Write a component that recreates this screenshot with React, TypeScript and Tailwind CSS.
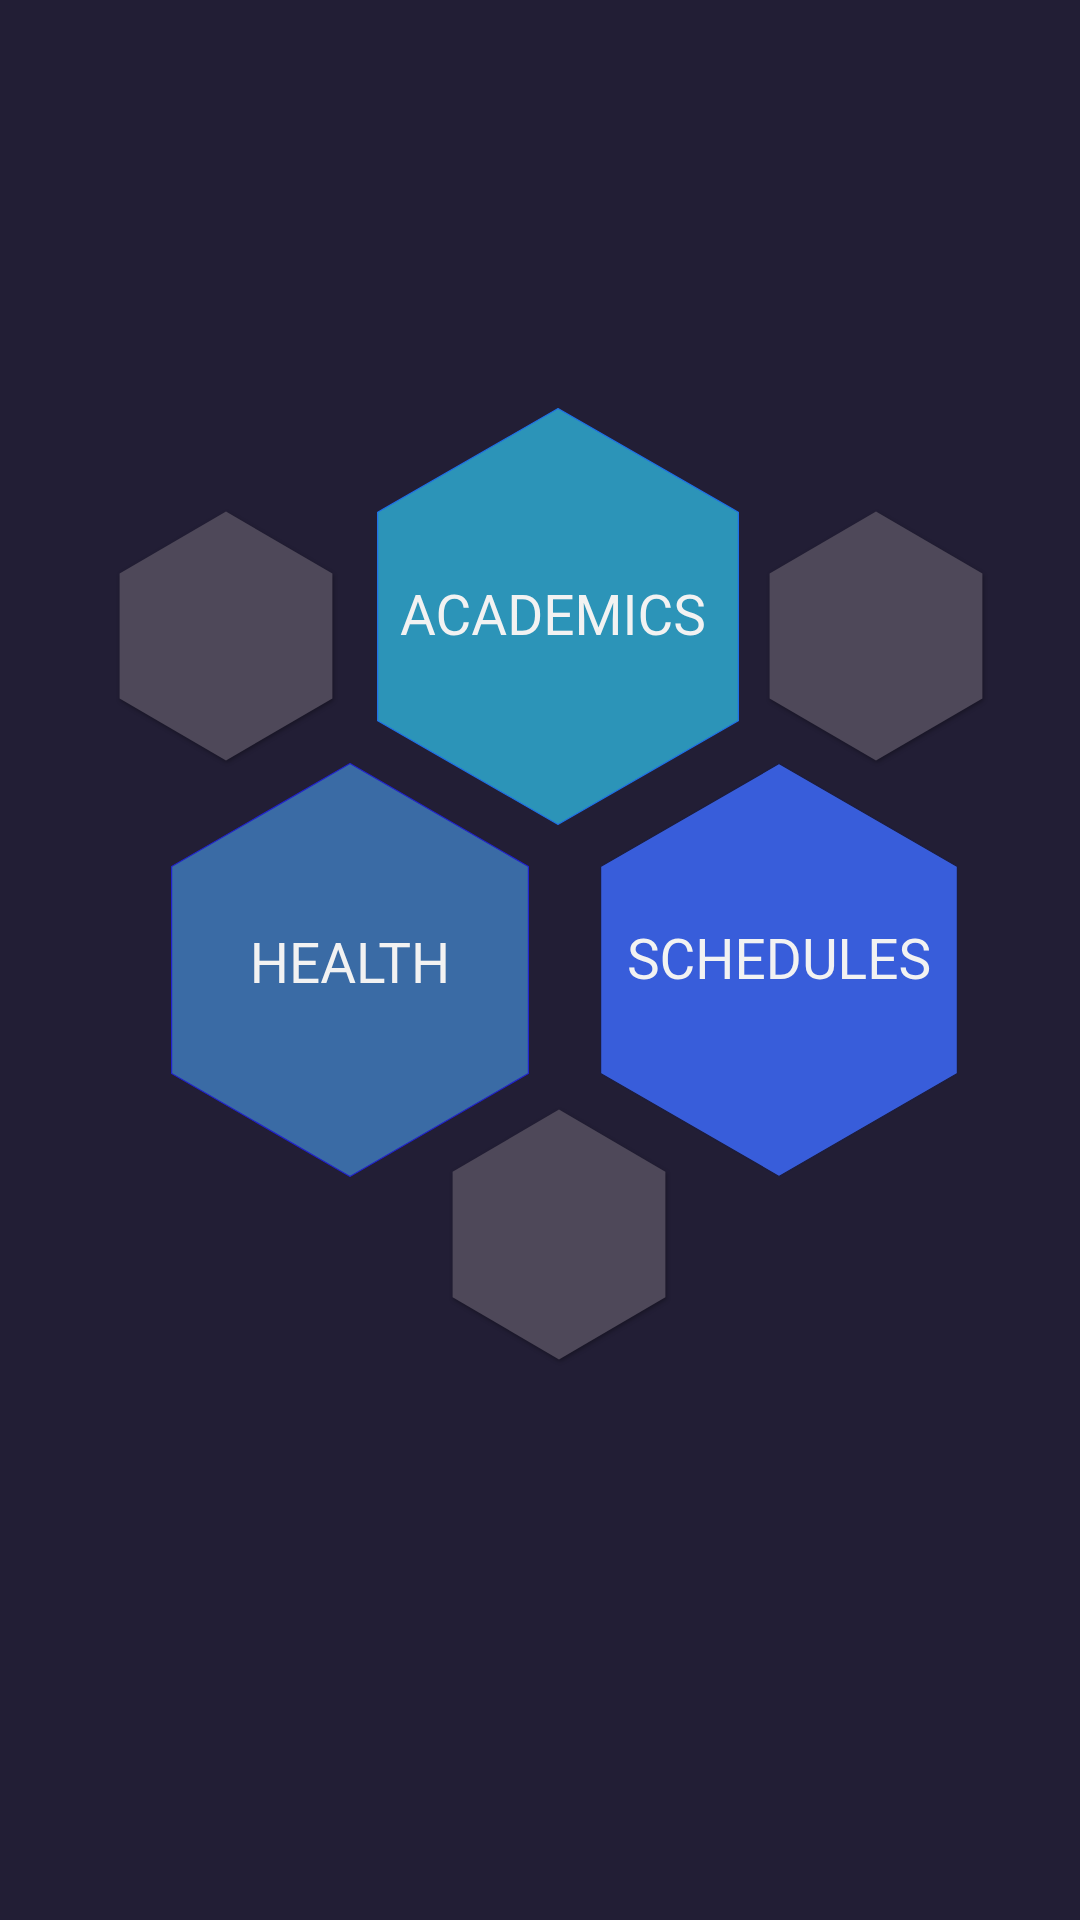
import React from "react";

type HexProps = {
  left: number;
  top: number;
  w: number;
  h: number;
  fill: string;
  stroke?: string;
  label?: string;
  textShift?: number;
  textShiftX?: number;
  shadow?: boolean;
};

function Hex({ left, top, w, h, fill, stroke, label, textShift = 0, textShiftX = 0, shadow }: HexProps) {
  const i = 0.6;
  const pts = [
    [w / 2, i],
    [w - i, h / 4],
    [w - i, (3 * h) / 4],
    [w / 2, h - i],
    [i, (3 * h) / 4],
    [i, h / 4],
  ]
    .map((p) => p.join(","))
    .join(" ");
  return (
    <div
      className="absolute"
      style={{ left, top, width: w, height: h }}
    >
      <svg
        width={w}
        height={h}
        viewBox={`0 0 ${w} ${h}`}
        className={shadow ? "absolute inset-0 drop-shadow-[1px_2px_2px_rgba(0,0,0,0.3)]" : "absolute inset-0"}
      >
        <polygon points={pts} fill={fill} stroke={stroke ?? "none"} strokeWidth={stroke ? 1.2 : 0} />
      </svg>
      {label && (
        <div className="absolute inset-0 flex items-center justify-center">
          <span
            className="text-[55px] leading-none text-[#f2f2f2] font-normal"
            style={{ fontFamily: "Roboto, 'Liberation Sans', sans-serif", transform: `translate(${textShiftX}px, ${textShift}px)` }}
          >
            {label}
          </span>
        </div>
      )}
    </div>
  );
}

export default function App() {
  return (
    <div className="relative w-[1080px] h-[1920px] bg-[#221e35] overflow-hidden">
      <Hex left={119} top={511} w={214} h={250} fill="#4e4859" shadow />
      <Hex left={769} top={511} w={214} h={250} fill="#4e4859" shadow />
      <Hex left={452} top={1109} w={214} h={251} fill="#4e4859" shadow />
      <Hex left={377} top={408} w={362} h={417} fill="#2c94b8" stroke="#1f6fe8" label="ACADEMICS" textShift={0} textShiftX={-5} />
      <Hex left={171} top={763} w={358} h={414} fill="#3a6ba5" stroke="#2222cc" label="HEALTH" textShift={-6} />
      <Hex left={600} top={763} w={358} h={414} fill="#385dda" stroke="#1c1c3c" label="SCHEDULES" textShift={-10} />
    </div>
  );
}
